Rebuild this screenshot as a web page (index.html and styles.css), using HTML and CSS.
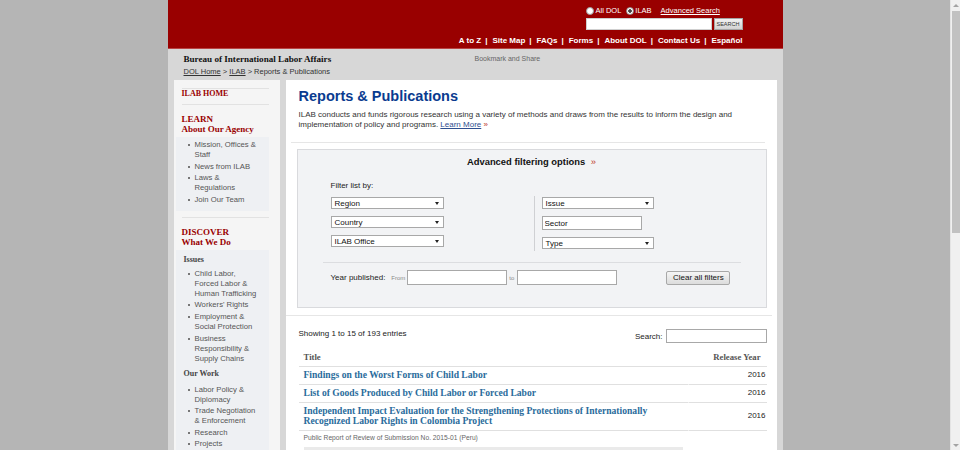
FILE: index.html
```html
<!DOCTYPE html>
<html lang="en">
<head>
<meta charset="utf-8">
<title>Reports &amp; Publications | Bureau of International Labor Affairs</title>
<link rel="stylesheet" href="styles.css">
</head>
<body>
<div class="viewport">
  <div class="page">
    <header class="masthead">
      <div class="search-box">
        <div class="search-opts">
          <span class="radio"></span><span class="opt opt-all">All DOL</span>
          <span class="radio checked"></span><span class="opt opt-ilab">ILAB</span>
          <a class="adv" href="#">Advanced Search</a>
        </div>
        <form class="search-row">
          <input class="search-input" type="text" aria-label="Search">
          <button class="search-btn" type="button">SEARCH</button>
        </form>
      </div>
      <nav class="topnav">
        <a href="#">A to Z</a><span class="sep">|</span>
        <a href="#">Site Map</a><span class="sep">|</span>
        <a href="#">FAQs</a><span class="sep">|</span>
        <a href="#">Forms</a><span class="sep">|</span>
        <a href="#">About DOL</a><span class="sep">|</span>
        <a href="#">Contact Us</a><span class="sep">|</span>
        <a href="#">Español</a>
      </nav>
    </header>

    <div class="band">
      <div class="band-row">
        <span class="agency">Bureau of International Labor Affairs</span>
        <span class="bookmark">Bookmark and Share</span>
      </div>
      <div class="crumbs"><a href="#">DOL Home</a> &gt; <a href="#">ILAB</a> &gt; Reports &amp; Publications</div>
    </div>

    <div class="content">
      <aside class="sidebar">
        <a class="sb-home" href="#">ILAB HOME</a>
        <section class="sb-section">
          <h3 class="sb-head">LEARN<br>About Our Agency</h3>
          <div class="sb-box">
            <ul class="sb-list">
              <li>Mission, Offices &amp; Staff</li>
              <li>News from ILAB</li>
              <li>Laws &amp; Regulations</li>
              <li>Join Our Team</li>
            </ul>
          </div>
        </section>
        <section class="sb-section sb-divided">
          <h3 class="sb-head">DISCOVER<br>What We Do</h3>
          <div class="sb-box">
            <h4 class="sb-sub">Issues</h4>
            <ul class="sb-list">
              <li>Child Labor, Forced Labor &amp; Human Trafficking</li>
              <li>Workers' Rights</li>
              <li>Employment &amp; Social Protection</li>
              <li>Business Responsibility &amp; Supply Chains</li>
            </ul>
            <h4 class="sb-sub sb-sub-next">Our Work</h4>
            <ul class="sb-list sb-list-next">
              <li>Labor Policy &amp; Diplomacy</li>
              <li>Trade Negotiation &amp; Enforcement</li>
              <li>Research</li>
              <li>Projects</li>
            </ul>
          </div>
        </section>
      </aside>

      <main class="main">
        <h1 class="page-title">Reports &amp; Publications</h1>
        <p class="intro"><span class="intro-line">ILAB conducts and funds rigorous research using a variety of methods and draws from the results to inform the design and</span><span class="intro-line">implementation of policy and programs. <a class="more" href="#">Learn More</a> <span class="raquo">»</span></span></p>
        <hr class="rule">

        <section class="filters">
          <h2 class="filters-title">Advanced filtering options <span class="raquo">»</span></h2>
          <div class="filter-label">Filter list by:</div>
          <div class="filter-grid">
            <div class="filter-col">
              <div class="select"><span>Region</span><i class="caret"></i></div>
              <div class="select"><span>Country</span><i class="caret"></i></div>
              <div class="select"><span>ILAB Office</span><i class="caret"></i></div>
            </div>
            <div class="divider"></div>
            <div class="filter-col filter-col-right">
              <div class="select select-right"><span>Issue</span><i class="caret"></i></div>
              <input class="text-field" type="text" value="Sector" aria-label="Sector">
              <div class="select select-right"><span>Type</span><i class="caret"></i></div>
            </div>
          </div>
          <hr class="filter-rule">
          <div class="year-row">
            <span class="year-label">Year published:</span>
            <span class="from">From</span>
            <input class="year-input" type="text" aria-label="From">
            <span class="to">to</span>
            <input class="year-input" type="text" aria-label="To">
            <button class="clear-btn" type="button">Clear all filters</button>
          </div>
        </section>

        <hr class="rule rule-wide">

        <div class="table-top">
          <span class="count">Showing 1 to 15 of 193 entries</span>
          <label class="search-label">Search: <input type="text" class="table-search"></label>
        </div>

        <table class="results">
          <thead>
            <tr><th class="th-title">Title</th><th class="th-year">Release Year</th></tr>
          </thead>
          <tbody>
            <tr><td class="title"><a href="#">Findings on the Worst Forms of Child Labor</a></td><td class="year">2016</td></tr>
            <tr><td class="title"><a href="#">List of Goods Produced by Child Labor or Forced Labor</a></td><td class="year">2016</td></tr>
            <tr><td class="title"><a href="#">Independent Impact Evaluation for the Strengthening Protections of Internationally Recognized Labor Rights in Colombia Project</a></td><td class="year">2016</td></tr>
            <tr><td class="note">Public Report of Review of Submission No. 2015-01 (Peru)</td><td class="note-year"></td></tr>
            <tr><td class="bar-cell"><div class="bar"></div></td><td class="bar-cell"></td></tr>
          </tbody>
        </table>
      </main>
    </div>
  </div>
</div>
<div class="scrollbar">
  <span class="sb-arrow up"></span>
  <span class="sb-thumb"></span>
  <span class="sb-track"></span>
  <span class="sb-arrow down"></span>
</div>
</body>
</html>
```
FILE: styles.css
```css
* { box-sizing: border-box; margin: 0; padding: 0; }

body {
  display: flex;
  height: 450px;
  overflow: hidden;
  background: #b5b5b5;
  font-family: "Liberation Sans", Arial, sans-serif;
  font-size: 8px;
  color: #333;
}

a { color: inherit; }

.viewport { flex: 1; min-width: 0; overflow: hidden; }

.page {
  width: 615px;
  margin: 0 auto;
  background: #d7d7d7;
  min-height: 450px;
}

/* ---------- masthead ---------- */
.masthead {
  height: 49px;
  background: #990000;
  border-bottom: 1px solid #b84444;
  display: flex;
  flex-direction: column;
  align-items: flex-end;
  padding: 5px 40px 0 0;
  color: #fff;
}

.search-box { width: 157px; }

.search-opts {
  display: flex;
  align-items: center;
  height: 12px;
  font-size: 7.5px;
  line-height: 12px;
}

.radio {
  width: 8px;
  height: 8px;
  border-radius: 50%;
  border: 1px solid #9a9a9a;
  background: #fff;
  margin-right: 2px;
  flex: none;
}
.radio.checked { background: radial-gradient(circle, #444 0 1.5px, #fff 2px); }

.opt-all { margin-right: 5px; }
.opt-ilab { margin-left: -1px; margin-right: 9px; }
.adv { color: #fff; }

.search-row { display: flex; gap: 2px; margin-top: 1px; }
.search-input {
  width: 126px;
  height: 12px;
  border: 1px solid #cfcfcf;
  background: #fff;
}
.search-btn {
  width: 29px;
  height: 12px;
  font: 5.5px "Liberation Sans", Arial, sans-serif;
  color: #333;
  background: linear-gradient(#f2f2f2, #d2d2d2);
  border: 1px solid #a5a5a5;
}

.topnav {
  margin-top: 6px;
  display: flex;
  white-space: nowrap;
  font-weight: bold;
  font-size: 8px;
  line-height: 10px;
}
.topnav a { color: #fff; text-decoration: none; }
.topnav .sep { margin: 0 5px 0 4px; }

/* ---------- band ---------- */
.band { height: 29px; padding: 4px 0 0 16px; }
.band-row {
  display: grid;
  grid-template-columns: 291px auto;
  line-height: 12px;
}
.agency {
  font: bold 9.1px/12px "Liberation Serif", "Times New Roman", serif;
  color: #111;
}
.bookmark { font-size: 7px; color: #666; }
.crumbs {
  margin-top: 2px;
  font-size: 7.5px;
  line-height: 10px;
  color: #333;
}

/* ---------- content ---------- */
.content {
  display: flex;
  gap: 6px;
  padding: 2px 6px 0;
}

.sidebar {
  width: 106px;
  flex: none;
  background: #f5f5f5;
  padding: 8px 11px 20px 8px;
  min-height: 380px;
}

.sb-home {
  display: block;
  border-top: 1px solid #e2e2e2;
  border-bottom: 1px solid #e2e2e2;
  padding: 0 0 5px;
  font: bold 8px/10px "Liberation Serif", "Times New Roman", serif;
  color: #990000;
  text-decoration: none;
}

.sb-divided { border-top: 1px solid #e2e2e2; margin-top: 6px; }

.sb-head {
  margin-top: 9px;
  font: bold 9px/10px "Liberation Serif", "Times New Roman", serif;
  color: #990000;
}

.sb-box {
  margin: 3px 0 0 -6px;
  background: #eef0f3;
  padding: 3px 8px 6px 19px;
}

.sb-sub {
  margin: 2px 0 0 -11px;
  font: bold 8px/10px "Liberation Serif", "Times New Roman", serif;
  color: #444;
}
.sb-sub-next { margin-top: 5px; }

.sb-list { list-style: none; }
.sb-sub + .sb-list { margin-top: 4px; }
.sb-sub + .sb-list-next { margin-top: 6px; }

.sb-list li {
  display: flex;
  font-size: 7.7px;
  line-height: 10px;
  color: #555;
  margin-top: 1.6px;
}
.sb-list li:first-child { margin-top: 0; }
.sb-list li::before {
  content: "";
  flex: none;
  width: 2px;
  height: 2px;
  background: #777;
  margin: 4px 5px 0 -7px;
}

/* ---------- main ---------- */
.main {
  flex: 1;
  min-width: 0;
  background: #fff;
  padding: 7px 10px 0 13px;
  min-height: 380px;
}

.page-title {
  font: bold 14.5px/18px "Liberation Sans", Arial, sans-serif;
  color: #0a3b8f;
}

.intro {
  margin-top: 5px;
  font-size: 8px;
  line-height: 10px;
  color: #333;
}
.intro-line { display: block; white-space: nowrap; }
.intro .more { color: #2f4f8f; }
.raquo { color: #c0392b; }

.rule {
  border: 0;
  border-top: 1px solid #e6e6e6;
  margin: 12px 2px 0 -8px;
}
.rule-wide { margin: 7px -5px 0 -13px; }

/* filters */
.filters {
  margin: 6px 0 0 -2px;
  border: 1px solid #d9dadd;
  background: #f2f3f5;
  padding: 6px 0 22px;
}
.filters-title {
  text-align: center;
  font: bold 9.4px/12px "Liberation Sans", Arial, sans-serif;
  color: #111;
}
.filters-title .raquo { font-weight: normal; margin-left: 3px; }

.filter-label { margin: 13px 0 0 33px; line-height: 10px; color: #222; }

.filter-grid {
  display: grid;
  grid-template-columns: 203px 1px 1fr;
  margin: 5px 0 0 33px;
}
.filter-col {
  display: flex;
  flex-direction: column;
  align-items: flex-start;
  gap: 7px;
  padding-top: 1px;
}
.filter-col-right { padding-left: 7px; }
.divider { background: #cfd0d3; height: 55px; }

.select {
  display: flex;
  align-items: center;
  justify-content: space-between;
  width: 113px;
  height: 12px;
  background: #fff;
  border: 1px solid #a8a8a8;
  padding: 0 4px 0 3px;
  font-size: 8px;
  color: #111;
}
.select-right { width: 112px; }
.caret {
  width: 0;
  height: 0;
  border-left: 2px solid transparent;
  border-right: 2px solid transparent;
  border-top: 3.5px solid #222;
}
.text-field {
  width: 100px;
  height: 14px;
  border: 1px solid #a8a8a8;
  font: 8px "Liberation Sans", Arial, sans-serif;
  padding: 0 2px;
  color: #111;
  background: #fff;
}

.filter-rule {
  border: 0;
  border-top: 1px solid #dcdde0;
  margin: 11px 25px 0;
}

.year-row {
  display: flex;
  align-items: center;
  margin: 7px 0 0 33px;
  height: 15px;
  color: #222;
}
.from { font-size: 6px; color: #888; margin: 0 2px 0 6px; }
.to { font-size: 6px; color: #888; margin: 0 3px 0 2px; }
.year-input {
  width: 100px;
  height: 15px;
  border: 1px solid #a8a8a8;
  background: #fff;
}
.clear-btn {
  margin-left: 49px;
  width: 64px;
  height: 14px;
  font: 8px "Liberation Sans", Arial, sans-serif;
  color: #111;
  background: linear-gradient(#f5f5f5, #dcdcdc);
  border: 1px solid #a8a8a8;
  border-radius: 2px;
}

/* table */
.table-top {
  display: flex;
  justify-content: space-between;
  align-items: flex-start;
  margin-top: 13px;
}
.count { line-height: 10px; color: #222; }
.search-label { display: flex; align-items: center; gap: 3px; color: #222; }
.table-search {
  width: 101px;
  height: 14px;
  border: 1px solid #a8a8a8;
  background: #fff;
}

.results {
  width: 468px;
  border-collapse: separate;
  border-spacing: 0;
  margin-top: 6px;
}
.results th {
  font: bold 8.7px/10px "Liberation Serif", "Times New Roman", serif;
  color: #555;
  text-align: left;
  padding: 3px 5px 4px;
  border-bottom: 1px solid #e0e0e0;
}
.results .th-year { text-align: right; padding-right: 6px; }
.results td {
  padding: 3px 5px 4px;
  border-bottom: 1px solid #e0e0e0;
  font-size: 8px;
  line-height: 10px;
  vertical-align: middle;
  color: #222;
}
.results td.title {
  width: 390px;
  border-right: 1px solid #fff;
  font: bold 9.6px/10px "Liberation Serif", "Times New Roman", serif;
}
.results td.year { text-align: right; padding-right: 1px; }
.results td.title a {
  color: #2a6c9c;
  text-decoration: none;
}
.results td.note {
  font-size: 6.7px;
  color: #666;
  padding-top: 2px;
  border-bottom: 0;
}
.results td.note-year { border-bottom: 0; }
.results td.bar-cell { padding: 0 0 0 5px; border-bottom: 0; }
.bar { height: 6px; width: 379px; background: #eaeaea; }

/* ---------- scrollbar ---------- */
.scrollbar {
  width: 10px;
  flex: none;
  background: #f0f0f0;
  border-left: 1px solid #e4e4e4;
  display: flex;
  flex-direction: column;
  align-items: center;
}
.sb-arrow {
  height: 10px;
  width: 100%;
  display: flex;
  align-items: center;
  justify-content: center;
}
.sb-arrow::before {
  content: "";
  border-left: 3px solid transparent;
  border-right: 3px solid transparent;
  border-bottom: 3px solid #a3a3a3;
}
.sb-arrow.down::before { border-bottom: 0; border-top: 3px solid #a3a3a3; }
.sb-thumb { width: 8px; height: 222px; background: #c1c1c1; margin-top: 1px; }
.sb-track { flex: 1; }
```
